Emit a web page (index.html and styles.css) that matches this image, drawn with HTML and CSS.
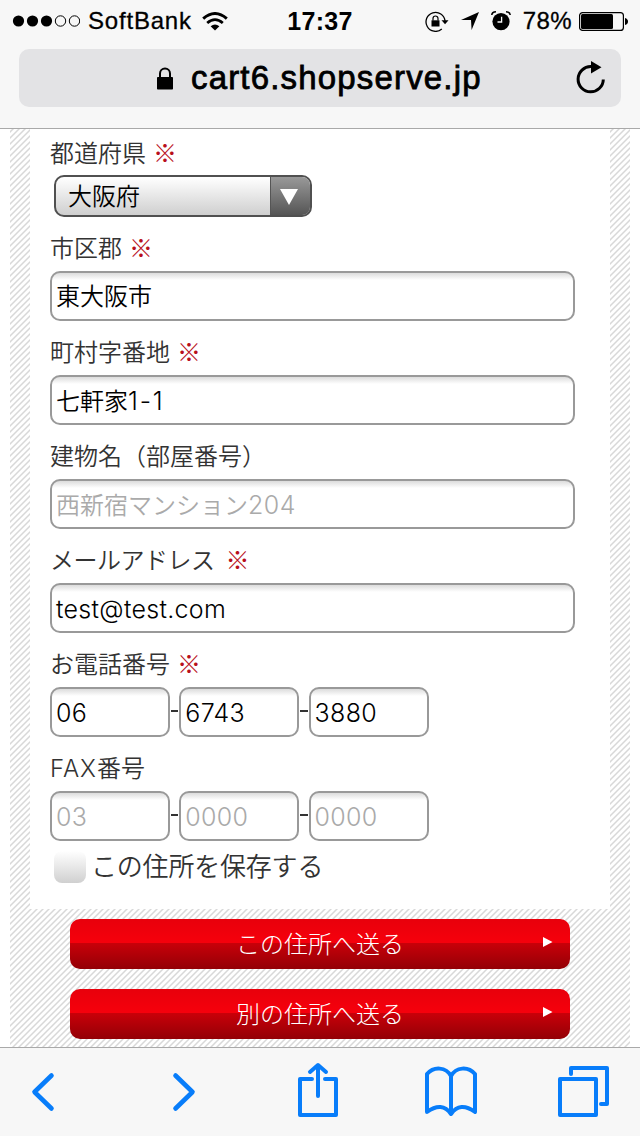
FILE: index.html
```html
<!DOCTYPE html>
<html lang="ja">
<head>
<meta charset="utf-8">
<title>お届け先</title>
<link rel="stylesheet" href="styles.css">
</head>
<body>
<header class="chrome">
  <div class="status">
    <div class="status-left">
      <svg class="signal" width="68" height="12" viewBox="0 0 68 12"><g fill="#000"><circle cx="6.5" cy="6" r="5.6"/><circle cx="20.500" cy="6" r="5.6"/><circle cx="34.500" cy="6" r="5.6"/></g><g fill="none" stroke="#000"><circle cx="48.500" cy="6" r="5.2"/><circle cx="62.500" cy="6" r="5.2"/></g></svg>
      <span class="carrier">SoftBank</span>
      <svg class="wifi" width="26" height="19" viewBox="0 0 26 19"><path d="M1.2 6.6Q13-3.5 24.8 6.6" fill="none" stroke="#000" stroke-width="3"/><path d="M5.2 11Q13 4.3 20.8 11" fill="none" stroke="#000" stroke-width="2.8"/><path d="M8.6 14.2Q13 10.6 17.4 14.2L13 18.6Z"/></svg>
    </div>
    <span class="clock">17:37</span>
    <div class="status-right">
      <svg class="lock-rotation" width="24" height="21" viewBox="0 0 24 21"><path d="M16.8 18A9.5 9.5 0 1 1 20 10" fill="none" stroke="#000" stroke-width="1.3"/><path d="M16.5 9.3H23.5L20 13.2Z"/><path d="M6.5 9.3H14.5V15.5H6.5Z"/><path d="M8 9.5V7.5a2.5 2.5 0 0 1 5 0v2" fill="none" stroke="#000" stroke-width="1.2"/></svg>
      <svg width="18" height="18" viewBox="0 0 18 18"><path d="M0 8L18 0L10.6 18L10 8Z"/></svg>
      <svg width="20" height="20" viewBox="0 0 20 20"><circle cx="10" cy="10.6" r="8.6"/><path d="M.8 4Q1 1 5 .8M19.2 4Q19 1 15 .8" fill="none" stroke="#000" stroke-width="1.6"/><path d="M10.6 5.8V11H6.5" fill="none" stroke="#f7f7f7" stroke-width="1.3"/></svg>
      <span class="percent">78%</span>
      <svg class="battery" width="49" height="19" viewBox="0 0 49 19"><rect x=".6" y=".6" width="43.8" height="17.8" rx="3" fill="none" stroke="#000" stroke-width="1.2"/><rect x="2" y="2" width="32" height="15" rx="1.5"/><path d="M46 6Q49 7 49 9.5T46 13Z"/></svg>
    </div>
  </div>
  <div class="address">
    <svg class="lock" width="18" height="23" viewBox="0 0 18 23"><rect x="1" y="10" width="16" height="12.5" rx=".8"/><path d="M4 11V6.5a5 5 0 0 1 10 0V11" fill="none" stroke="#000" stroke-width="2"/></svg>
    <span class="host">cart6.shopserve.jp</span>
    <svg class="reload" width="30" height="34" viewBox="0 0 30 34"><path d="M15 5.6A12.6 12.6 0 1 0 27.3 18.4" fill="none" stroke="#000" stroke-width="3"/><path d="M15 0L25.500 6.2L15 12.5Z"/></svg>
  </div>
</header>
<main class="page">
  <form class="form">
    <label class="label">都道府県<b class="req">※</b></label>
    <div class="select"><span class="select-value">大阪府</span><span class="select-arrow"><svg width="18" height="16" viewBox="0 0 18 16"><path d="M0 0H18L9 16Z" fill="#fff"/></svg></span></div>
    <label class="label">市区郡<b class="req">※</b></label>
    <div class="field">東大阪市</div>
    <label class="label">町村字番地<b class="req">※</b></label>
    <div class="field">七軒家<span class="block-no">1-1</span></div>
    <label class="label">建物名（部屋番号）</label>
    <div class="field hint">西新宿マンション<span class="digits">204</span></div>
    <label class="label"><span class="kana">メールアドレス</span><b class="req req-wide">※</b></label>
    <div class="field"><span class="email">test@test.com</span></div>
    <label class="label">お電話番号<b class="req">※</b></label>
    <div class="trio"><div class="field">06</div><i class="dash"></i><div class="field">6743</div><i class="dash"></i><div class="field">3880</div></div>
    <label class="label"><span class="latin">FAX</span>番号</label>
    <div class="trio"><div class="field hint">03</div><i class="dash"></i><div class="field hint">0000</div><i class="dash"></i><div class="field hint">0000</div></div>
    <div class="save"><span class="check"></span><span class="save-text">この住所を保存する</span></div>
  </form>
  <div class="actions">
    <div class="button">この住所へ送る<svg class="go" width="10" height="12" viewBox="0 0 10 12"><path d="M0 1L9.500 6L0 11Z" fill="#fff"/></svg></div>
    <div class="button">別の住所へ送る<svg class="go" width="10" height="12" viewBox="0 0 10 12"><path d="M0 1L9.500 6L0 11Z" fill="#fff"/></svg></div>
  </div>
</main>
<nav class="toolbar">
  <svg width="640" height="88" viewBox="0 0 640 88" fill="none" stroke="#087dfa" stroke-width="4" stroke-linecap="round" stroke-linejoin="round">
    <path stroke-width="4.600" d="M51.500 27.500L34.500 44L51.500 60.500"/>
    <path stroke-width="4.600" d="M175.500 27.500L192.500 44L175.500 60.500"/>
    <path d="M312 31H300V67H336V31H325M318 48V18M310 24L318 17L326 24"/>
    <path d="M451 66V28C446 19 434 18 427 26V64Q442 53 451 66Q460 53 475 64V26C468 18 456 19 451 28"/>
    <path d="M560 31H596V67H560ZM571 26V20H607V56H601"/>
  </svg>
</nav>
</body>
</html>
```
FILE: styles.css
```css
* { box-sizing: border-box; }
body {
  margin: 0;
  width: 640px;
  height: 1136px;
  overflow: hidden;
  display: flex;
  flex-direction: column;
  background: #fff;
  color: #333;
  font: 350 24px/36px Inter, "Noto Sans CJK JP", sans-serif;
}
svg { display: block; flex: none; }

.chrome {
  height: 129px;
  flex: none;
  background: #f7f7f7;
  border-bottom: 1px solid #a9a9a9;
  color: #000;
  font-family: "Liberation Sans", sans-serif;
}
.status {
  height: 41px;
  padding: 1px 12px 0;
  display: grid;
  grid-template-columns: 1fr auto 1fr;
  align-items: center;
}
.status-left, .status-right { display: flex; align-items: center; }
.carrier { margin: 0 12px 0 8px; font-size: 24px; font-weight: 400; -webkit-text-stroke: .3px #000; letter-spacing: .8px; }
.carrier { margin-right: 10px; }
.clock { font-size: 25px; font-weight: 700; letter-spacing: .3px; }
.status-right { justify-content: flex-end; gap: 12px; }
.percent { font-size: 24px; font-weight: 400; -webkit-text-stroke: .3px #000; letter-spacing: .4px; }
.battery { margin-left: -5px; }
.address {
  height: 58px;
  margin: 8px 19px 0;
  padding: 0 15px 0 137px;
  border-radius: 10px;
  background: #e3e3e5;
  display: flex;
  align-items: center;
}
.host { margin-left: 17px; font-size: 33px; font-weight: 400; -webkit-text-stroke: .8px #000; letter-spacing: 1.170px; }
.reload { margin-left: auto; }

.page {
  height: 918px;
  flex: none;
  margin: 0 10px;
  padding: 0 20px;
  background: linear-gradient(135deg, #fff 10%, #d8d8d8 22% 28%, #fff 40% 60%, #d8d8d8 72% 78%, #fff 90%) 0 0 / 6px 6px;
}
.form { height: 780px; padding: 4px 35px 0 20px; background: #fff; }
.label { display: block; height: 40px; line-height: 42px; white-space: nowrap; }
.req { margin-left: 7px; font-family: "Noto Sans CJK JP", sans-serif; font-weight: 350; line-height: 0; color: #b80f1b; }
.req-wide { margin-left: 11px; }
.kana { letter-spacing: -.5px; }
.select {
  display: flex;
  width: 258px;
  height: 42px;
  margin: 2px 4px 11px;
  border: 2px solid #505050;
  border-radius: 10px;
  overflow: hidden;
  background: linear-gradient(#fff, #cfcfcf);
  color: #000;
}
.select-value { flex: 1; padding-left: 12px; line-height: 40px; }
.select-arrow {
  width: 40px;
  border-left: 1px solid #555;
  background: linear-gradient(#999, #555);
  display: grid;
  place-items: center;
  padding: 2px 3px 0 0;
}
.field {
  height: 50px;
  margin: 3px 0 11px;
  padding: 0 4px;
  border: 2px solid #999;
  border-radius: 10px;
  background: linear-gradient(#dcdcdc, #fff 7px);
  color: #000;
  line-height: 48px;
  white-space: nowrap;
}
.block-no { font-size: 25px; letter-spacing: 1.800px; }
.digits { font-size: 25px; letter-spacing: .5px; }
.latin { letter-spacing: 1px; }
.email { font-size: 25px; letter-spacing: .300px; }
.hint { color: #aaa; }
.trio { display: flex; align-items: center; }
.trio .field { width: 120px; font-size: 25px; letter-spacing: .3px; font-weight: 300; }
.dash { width: 7.300px; height: 2px; margin: 0 1px 11px; background: #333; }
.save { display: flex; align-items: center; height: 40px; padding-left: 4px; margin-top: -5px; }
.check { width: 32px; height: 32px; border-radius: 8px; background: linear-gradient(#fff, #d0d0d0); }
.save-text { margin: -1px 0 0 5px; font-size: 26px; letter-spacing: -.2px; }

.actions { padding: 10px 40px; display: grid; gap: 20px; }
.button {
  position: relative;
  height: 50px;
  border-radius: 10px;
  background: linear-gradient(#e8000c, #f6000c 48%, #c80009 49%, #930006);
  color: #fff;
  font-weight: 300;
  text-align: center;
  line-height: 51px;
}
.go { position: absolute; right: 17px; top: 17px; }
.toolbar { height: 89px; flex: none; border-top: 1px solid #a9a9a9; background: #f7f7f7; }
```
